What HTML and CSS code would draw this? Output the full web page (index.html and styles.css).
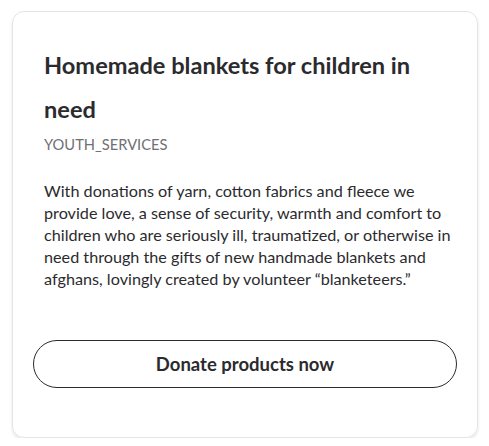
FILE: index.html
```html
<!DOCTYPE html>
<html lang="en">
<head>
<meta charset="utf-8">
<link rel="stylesheet" href="styles.css">
</head>
<body>
<div class="card">
  <h2 class="title">Homemade blankets for children in need</h2>
  <div class="category">YOUTH_SERVICES</div>
  <p class="desc">With donations of yarn, cotton fabrics and fleece we provide love, a sense of security, warmth and comfort to children who are seriously ill, traumatized, or otherwise in need through the gifts of new handmade blankets and afghans, lovingly created by volunteer “blanketeers.”</p>
  <button class="donate">Donate products now</button>
</div>
</body>
</html>
```
FILE: styles.css
```css
* { box-sizing: border-box; }
html, body { margin: 0; background: #fff; }
body {
  padding: 11px 11px 0 12px;
  font-family: Lato, "Noto Sans", sans-serif;
  color: #2b2b2e;
}
.card {
  width: 466px;
  border: 1px solid #e4e4e4;
  border-radius: 12px;
  box-shadow: 0 2px 3px rgba(0,0,0,0.10);
  padding: 31px 20px 49px 20px;
  display: flex;
  flex-direction: column;
}
.title {
  margin: 0 11px;
  font-size: 23.6px;
  line-height: 44px;
  font-weight: 700;
  color: #2b2b2e;
}
.category {
  margin: 3.4px 11px 0;
  font-size: 14.7px;
  line-height: 20px;
  color: #707075;
}
.desc {
  margin: 25.4px 0 0 11px;
  font-size: 16.2px;
  line-height: 22px;
  color: #2b2b2e;
}
.donate {
  margin-top: 50.3px;
  height: 48px;
  width: 100%;
  border: 1px solid #2b2b2e;
  border-radius: 24px;
  background: #fff;
  font-family: inherit;
  font-size: 18.5px;
  font-weight: 700;
  color: #2b2b2e;
  padding: 0;
}
```
